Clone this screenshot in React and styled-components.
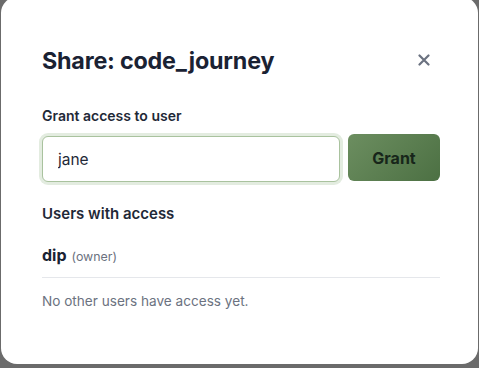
import React, { useState } from 'react';
import styled, { createGlobalStyle } from 'styled-components';

const GlobalStyle = createGlobalStyle`
  html, body {
    margin: 0;
    padding: 0;
    background: #6b6b6b;
    height: 100%;
    overflow: hidden;
  }
  body {
    font-family: Inter, "Liberation Sans", Arial, sans-serif;
    color: #1f2937;
  }
`;

const Backdrop = styled.div`
  width: 479px;
  height: 368px;
  background: #6b6b6b;
  overflow: hidden;
`;

const Modal = styled.div`
  box-sizing: border-box;
  width: 477px;
  height: 367px;
  margin: -3px 0 0 1px;
  background: #ffffff;
  border-radius: 16px;
  padding: 47px 38px 0 41px;
`;

const Header = styled.div`
  display: flex;
  align-items: center;
  justify-content: space-between;
  height: 32px;
`;

const Title = styled.h2`
  margin: 0;
  font-size: 23.3px;
  font-weight: 700;
  color: #1a2233;
  letter-spacing: -0.2px;
`;

const CloseButton = styled.button`
  width: 32px;
  height: 32px;
  border: none;
  background: transparent;
  display: flex;
  align-items: center;
  justify-content: center;
  padding: 0;
  cursor: pointer;
`;

const Label = styled.div`
  font-size: ${p => p.$size || 14}px;
  font-weight: 600;
  color: #1f2937;
  margin-top: ${p => p.$top || 0}px;
`;

const GrantRow = styled.div`
  display: flex;
  gap: 8px;
  margin-top: 12px;
`;

const Input = styled.input`
  box-sizing: border-box;
  flex: 1;
  height: 46px;
  border: 1px solid #a9c29e;
  border-radius: 6px;
  box-shadow: 0 0 0 3px #e3ece0;
  padding: 0 15px;
  font-family: inherit;
  font-size: 15.5px;
  color: #1f2937;
  outline: none;
`;

const GrantButton = styled.button`
  box-sizing: border-box;
  width: 92px;
  height: 47px;
  margin-top: -2px;
  border: none;
  border-radius: 6px;
  background: linear-gradient(135deg, #6c8e60 0%, #4c7043 100%);
  color: #17261a;
  font-family: inherit;
  font-size: 16px;
  font-weight: 700;
  cursor: pointer;
`;

const UserRow = styled.div`
  display: flex;
  align-items: baseline;
  gap: 5px;
  margin-top: 22px;
  padding-bottom: 12px;
  border-bottom: 1px solid #e5e7eb;
`;

const UserName = styled.span`
  font-size: 16px;
  font-weight: 700;
  color: #1a2233;
`;

const Role = styled.span`
  font-size: 12.4px;
  color: #6b7280;
`;

const Empty = styled.div`
  margin-top: 15px;
  font-size: 13.6px;
  color: #6b7280;
`;

export default function App() {
  const [name, setName] = useState('jane');
  return (
    <Backdrop>
      <GlobalStyle />
      <Modal>
        <Header>
          <Title>Share: code_journey</Title>
          <CloseButton aria-label="Close">
            <svg width="12" height="12" viewBox="0 0 12 12">
              <path d="M1.5 1.5 L10.5 10.5 M10.5 1.5 L1.5 10.5" stroke="#6b7280" strokeWidth="2.2" strokeLinecap="round" />
            </svg>
          </CloseButton>
        </Header>
        <Label $top={31}>Grant access to user</Label>
        <GrantRow>
          <Input value={name} onChange={e => setName(e.target.value)} />
          <GrantButton>Grant</GrantButton>
        </GrantRow>
        <Label $top={22} $size={15}>Users with access</Label>
        <UserRow>
          <UserName>dip</UserName>
          <Role>(owner)</Role>
        </UserRow>
        <Empty>No other users have access yet.</Empty>
      </Modal>
    </Backdrop>
  );
}
